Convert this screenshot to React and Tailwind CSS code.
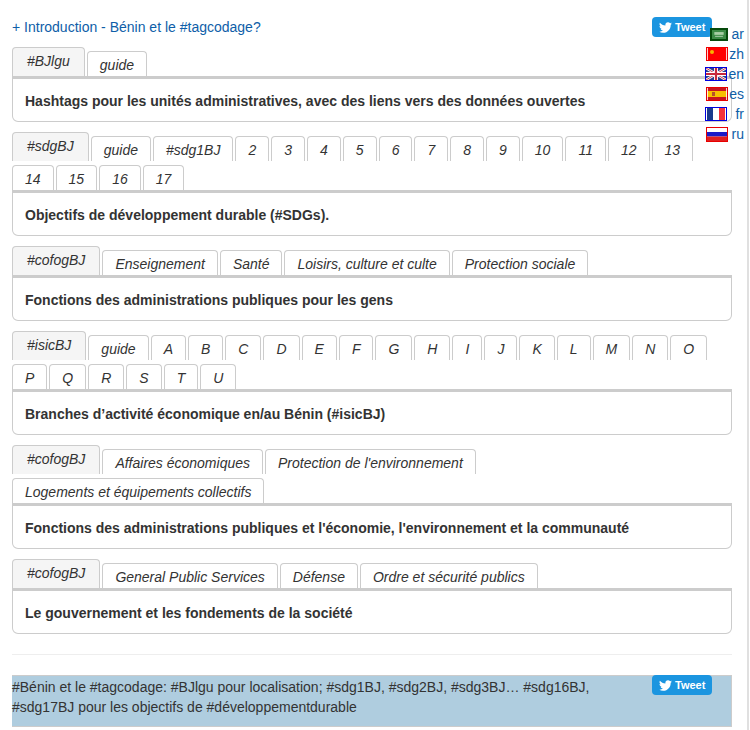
const F = "font-['Liberation_Sans',Arial,sans-serif]";

function Bird({ className }) {
  return (
    <svg viewBox="0 0 24 24" className={className} fill="currentColor">
      <path d="M23.95 4.57a10 10 0 0 1-2.82.77 4.96 4.96 0 0 0 2.16-2.72c-.95.55-2 .95-3.12 1.18a4.92 4.92 0 0 0-8.38 4.48C7.69 8.1 4.07 6.13 1.64 3.16a4.82 4.82 0 0 0-.67 2.48c0 1.71.87 3.21 2.19 4.1a4.9 4.9 0 0 1-2.23-.61v.06c0 2.39 1.7 4.38 3.95 4.83a5 5 0 0 1-2.21.08 4.94 4.94 0 0 0 4.6 3.42A9.87 9.87 0 0 1 0 19.54a14 14 0 0 0 7.56 2.21c9.05 0 14-7.5 14-13.98 0-.21 0-.42-.02-.63a9.94 9.94 0 0 0 2.41-2.57z" />
    </svg>
  );
}

function Tweet({ className = "" }) {
  return (
    <a className={`absolute flex h-5 w-[60px] items-center gap-[3px] rounded-[4px] bg-[#1b95e0] pl-[7px] text-[11px] font-bold leading-none text-white ${className}`}>
      <Bird className="h-[13px] w-[13px]" />
      <span>Tweet</span>
    </a>
  );
}

function Flag({ code }) {
  const common = "h-[14px] w-[22px] shrink-0 border";
  if (code === "ar") return (
    <svg viewBox="0 0 18 13" className="h-[13px] w-[18px] shrink-0 border-2 border-[#064a0c]" preserveAspectRatio="none">
      <rect width="18" height="13" fill="#3d8b46" />
      <rect x="3" y="3" width="12" height="4" fill="#a9cfa6" />
      <rect x="4" y="8.5" width="10" height="1" fill="#dbe9d8" />
    </svg>
  );
  if (code === "zh") return (
    <svg viewBox="0 0 20 12" className={`${common} border-[#f00000]`} preserveAspectRatio="none">
      <rect width="20" height="12" fill="#f00" />
      <circle cx="5" cy="4" r="2" fill="#f7b500" />
      <rect x="0" width="0.8" height="12" fill="#fff" />
      <rect x="19.2" width="0.8" height="12" fill="#fff" />
    </svg>
  );
  if (code === "en") return (
    <svg viewBox="0 0 20 12" className={`${common} border-[#0000e0]`} preserveAspectRatio="none">
      <rect width="20" height="12" fill="#2b3f8c" />
      <path d="M0 0L20 12M20 0L0 12" stroke="#fff" strokeWidth="2.4" />
      <path d="M0 0L20 12M20 0L0 12" stroke="#c8283c" strokeWidth="0.9" />
      <path d="M10 0V12M0 6H20" stroke="#fff" strokeWidth="4" />
      <path d="M10 0V12M0 6H20" stroke="#c8283c" strokeWidth="2.2" />
    </svg>
  );
  if (code === "es") return (
    <svg viewBox="0 0 20 12" className={`${common} border-[#e80000]`} preserveAspectRatio="none">
      <rect width="20" height="12" fill="#c8141e" />
      <rect y="3" width="20" height="6" fill="#f8c000" />
      <rect x="5" y="4" width="3" height="4" fill="#b5502a" />
      <rect x="0" width="0.8" height="12" fill="#fff" />
      <rect x="19.2" width="0.8" height="12" fill="#fff" />
    </svg>
  );
  if (code === "fr") return (
    <svg viewBox="0 0 20 12" className={`${common} border-[#0000e0]`} preserveAspectRatio="none">
      <rect width="20" height="12" fill="#fff" />
      <rect x="1" width="6" height="12" fill="#183a8c" />
      <rect x="13" width="6" height="12" fill="#f5323c" />
    </svg>
  );
  return (
    <svg viewBox="0 0 20 13" className="h-[15px] w-[22px] shrink-0 border border-[#e80000]" preserveAspectRatio="none">
      <rect width="20" height="4" fill="#fff" />
      <rect y="4" width="20" height="4.5" fill="#1a1ac8" />
      <rect y="8.5" width="20" height="4.5" fill="#e02020" />
    </svg>
  );
}

function Tab({ label, active }) {
  return (
    <a className={`relative block rounded-t-[4px] border border-b-0 border-[#cccccc] text-[14px] italic leading-[26px] text-[#333333] ${active ? "h-[29px] bg-[#f5f5f5] px-[14px]" : "h-[25px] bg-white px-[12px]"}`}>
      {label}
    </a>
  );
}

function Block({ tabs, title, narrow }) {
  return (
    <section className="mt-[10px]">
      <div className={`flex flex-wrap items-end gap-x-[2px] gap-y-[4px] ${narrow ? "pr-[24px]" : ""}`}>
        {tabs.map((t, i) => <Tab key={i} label={t} active={i === 0} />)}
      </div>
      <div className="h-[46px] rounded-b-[6px] border border-t-[3px] border-[#cccccc] px-3 pt-[12px] text-[14px] font-bold leading-[20px] text-[#333333]">
        {title}
      </div>
    </section>
  );
}

const n = (a, b) => Array.from({ length: b - a + 1 }, (_, i) => String(a + i));

const blocks = [
  { tabs: ["#BJlgu", "guide"], title: "Hashtags pour les unités administratives, avec des liens vers des données ouvertes" },
  { tabs: ["#sdgBJ", "guide", "#sdg1BJ", ...n(2, 17)], title: "Objectifs de développement durable (#SDGs)." },
  { tabs: ["#cofogBJ", "Enseignement", "Santé", "Loisirs, culture et culte", "Protection sociale"], title: "Fonctions des administrations publiques pour les gens" },
  { tabs: ["#isicBJ", "guide", ..."ABCDEFGHIJKLMNOPQRSTU".split("")], title: "Branches d’activité économique en/au Bénin (#isicBJ)" },
  { tabs: ["#cofogBJ", "Affaires économiques", "Protection de l'environnement", "Logements et équipements collectifs"], narrow: true, title: "Fonctions des administrations publiques et l'économie, l'environnement et la communauté" },
  { tabs: ["#cofogBJ", "General Public Services", "Défense", "Ordre et sécurité publics"], title: "Le gouvernement et les fondements de la société" },
];

const langs = ["ar", "zh", "en", "es", "fr", "ru"];

export default function App() {
  return (
    <div className={`relative h-[730px] w-[750px] overflow-hidden bg-white ${F}`}>
      <main className="w-[732px] pl-3">
        <p className="pt-[17px] text-[14px] leading-[20px] text-[#0e5ea8]">+ Introduction - Bénin et le #tagcodage?</p>
        <div>
          {blocks.map((b, i) => <Block key={i} {...b} />)}
        </div>
        <hr className="mt-5 border-[#eeeeee]" />
        <div className="mt-5 h-[52px] border border-l-0 border-[#cccccc] bg-[#afcddf] pt-[1px] text-[14px] leading-[20px] text-[#333333]">
          #Bénin et le #tagcodage: #BJlgu pour localisation; #sdg1BJ, #sdg2BJ, #sdg3BJ… #sdg16BJ,<br />
          #sdg17BJ pour les objectifs de #développementdurable
        </div>
      </main>
      <Tweet className="left-[652px] top-[17px]" />
      <Tweet className="left-[652px] top-[675px]" />
      <ul className="absolute right-[6px] top-[24px] flex flex-col items-end text-[14px] leading-[20px] text-[#0e5ea8]">
        {langs.map((c) => (
          <li key={c} className="flex h-[20px] items-center">
            <Flag code={c} />
            <span className={c === "fr" ? "ml-2" : c === "ar" || c === "ru" ? "ml-1" : "ml-px"}>{c}</span>
          </li>
        ))}
      </ul>
      <div className="absolute right-px top-0 h-full w-[2px] bg-[#e0e0e0]" />
    </div>
  );
}
